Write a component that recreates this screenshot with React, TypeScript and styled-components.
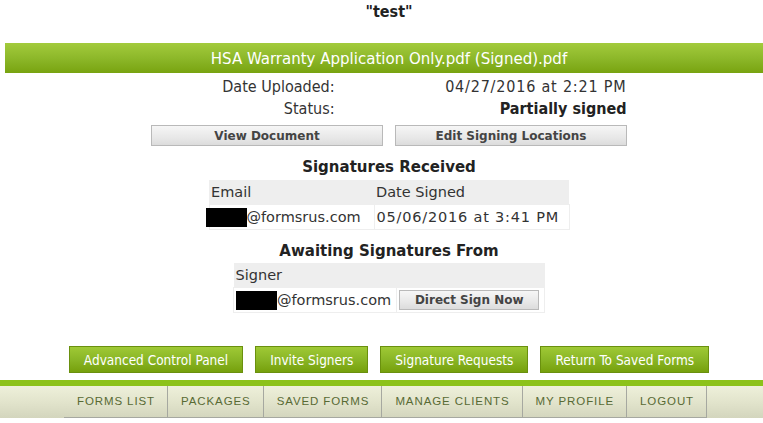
import React from "react"
import styled, { createGlobalStyle } from "styled-components"

const GlobalStyle = createGlobalStyle`
  html, body {
    margin: 0;
    padding: 0;
    background: #fff;
    overflow: hidden;
  }
  body {
    font-family: "DejaVu Sans", Verdana, sans-serif;
    color: #333;
  }
`

const narrow = `"DejaVu Sans Condensed", "DejaVu Sans", sans-serif`

const Page = styled.div`
  width: 768px;
  margin-left: 5px;
  display: flex;
  flex-direction: column;
  align-items: center;
`

const Title = styled.h1`
  margin: 2px 0 0;
  font-family: ${narrow};
  font-size: 16px;
  font-weight: bold;
  line-height: 20px;
  color: #222;
`

const FileBar = styled.div`
  align-self: stretch;
  margin-top: 21px;
  height: 30px;
  line-height: 30px;
  text-align: center;
  color: #fff;
  font-family: ${narrow};
  font-size: 16.7px;
  background: linear-gradient(to bottom, #a3cb3c 0%, #8db82a 50%, #78a310 100%);
`

const Info = styled.div`
  display: grid;
  grid-template-columns: 183px 292px;
  margin-top: 3px;
  font-family: ${narrow};
  font-size: 16px;
  color: #333;
`

const InfoCell = styled.div<{ $bold?: boolean }>`
  height: 22px;
  line-height: 22px;
  text-align: right;
  font-weight: ${(p) => (p.$bold ? "bold" : "normal")};
  color: ${(p) => (p.$bold ? "#222" : "#333")};
`

const Stamp = styled.span<{ $spacing: number }>`
  letter-spacing: ${(p) => p.$spacing}px;
`

const ButtonRow = styled.div`
  display: flex;
  gap: 12px;
  margin-top: 5px;
`

const GrayButton = styled.button<{ $width?: number }>`
  width: ${(p) => (p.$width ? `${p.$width}px` : "auto")};
  height: 21px;
  padding: 0 10px;
  border: 1px solid #b9b9b9;
  background: linear-gradient(to bottom, #f6f6f6 0%, #e8e8e8 60%, #dcdcdc 100%);
  font-family: "DejaVu Sans", Verdana, sans-serif;
  font-size: 12px;
  font-weight: bold;
  color: #444;
  cursor: pointer;
`

const SectionHead = styled.h2<{ $top: number }>`
  margin: ${(p) => p.$top}px 0 0;
  font-size: 15px;
  font-weight: bold;
  line-height: 18px;
  color: #222;
`

const Table = styled.table<{ $width: number; $top: number }>`
  width: ${(p) => p.$width}px;
  margin-top: ${(p) => p.$top}px;
  border-collapse: collapse;
  font-size: 14.5px;
  color: #333;
`

const HeadCell = styled.th`
  height: 24px;
  padding: 0 2px;
  background: #eeeeee;
  text-align: left;
  font-weight: normal;
`

const Cell = styled.td`
  height: 24px;
  padding: 0 2px;
  border: 1px solid #eeeeee;
  white-space: nowrap;
`

const Redacted = styled.span<{ $shift?: number }>`
  display: inline-block;
  width: 41px;
  height: 19px;
  margin-left: ${(p) => p.$shift ?? 0}px;
  vertical-align: -5px;
  background: #000;
`

const GreenRow = styled.div`
  display: flex;
  gap: 12px;
  margin-top: 33px;
`

const GreenButton = styled.button`
  height: 27px;
  padding: 0 14px;
  border: 1px solid #6a900e;
  background: linear-gradient(to bottom, #9fc935 0%, #8ab626 50%, #76a00c 100%);
  color: #fff;
  font-family: ${narrow};
  font-size: 13.5px;
  cursor: pointer;
`

const NavWrap = styled.nav`
  margin-top: 7px;
  border-top: 6px solid #8cc21a;
  height: 32px;
  background: linear-gradient(to bottom, #eef0da 0%, #e2e4cc 50%, #d3d5bd 100%);
  display: flex;
  justify-content: center;
  padding-left: 8px;
`

const NavList = styled.ul`
  display: flex;
  margin: 0;
  padding: 0;
  list-style: none;
  border-bottom: 1px solid #a6a8a0;
`

const NavItem = styled.li`
  padding: 0 12px 0 13px;
  line-height: 30px;
  border-right: 1px solid #a6a8a0;
  font-family: "Liberation Sans", Arial, sans-serif;
  font-size: 11.5px;
  letter-spacing: 0.9px;
  color: #586a34;
`

const navLinks = ["FORMS LIST", "PACKAGES", "SAVED FORMS", "MANAGE CLIENTS", "MY PROFILE", "LOGOUT"]

export default function App() {
  return (
    <>
      <GlobalStyle />
      <Page>
        <Title>"test"</Title>
        <FileBar>HSA Warranty Application Only.pdf (Signed).pdf</FileBar>
        <Info>
          <InfoCell>Date Uploaded:</InfoCell>
          <InfoCell>
            <Stamp $spacing={0.8}>04/27/2016 at 2:21 PM</Stamp>
          </InfoCell>
          <InfoCell>Status:</InfoCell>
          <InfoCell $bold>Partially signed</InfoCell>
        </Info>
        <ButtonRow>
          <GrayButton $width={232}>View Document</GrayButton>
          <GrayButton $width={232}>Edit Signing Locations</GrayButton>
        </ButtonRow>

        <SectionHead $top={12}>Signatures Received</SectionHead>
        <Table $width={361} $top={4}>
          <thead>
            <tr>
              <HeadCell style={{ width: 161 }}>Email</HeadCell>
              <HeadCell>Date Signed</HeadCell>
            </tr>
          </thead>
          <tbody>
            <tr>
              <Cell>
                <Redacted $shift={-6} />@formsrus.com
              </Cell>
              <Cell>
                <Stamp $spacing={0.8}>05/06/2016 at 3:41 PM</Stamp>
              </Cell>
            </tr>
          </tbody>
        </Table>

        <SectionHead $top={12}>Awaiting Signatures From</SectionHead>
        <Table $width={312} $top={3}>
          <thead>
            <tr>
              <HeadCell colSpan={2}>Signer</HeadCell>
            </tr>
          </thead>
          <tbody>
            <tr>
              <Cell>
                <Redacted />@formsrus.com
              </Cell>
              <Cell>
                <GrayButton $width={140} style={{ height: 20 }}>
                  Direct Sign Now
                </GrayButton>
              </Cell>
            </tr>
          </tbody>
        </Table>

        <GreenRow>
          <GreenButton>Advanced Control Panel</GreenButton>
          <GreenButton>Invite Signers</GreenButton>
          <GreenButton>Signature Requests</GreenButton>
          <GreenButton>Return To Saved Forms</GreenButton>
        </GreenRow>
      </Page>
      <NavWrap>
        <NavList>
          {navLinks.map((l) => (
            <NavItem key={l}>{l}</NavItem>
          ))}
        </NavList>
      </NavWrap>
    </>
  )
}
